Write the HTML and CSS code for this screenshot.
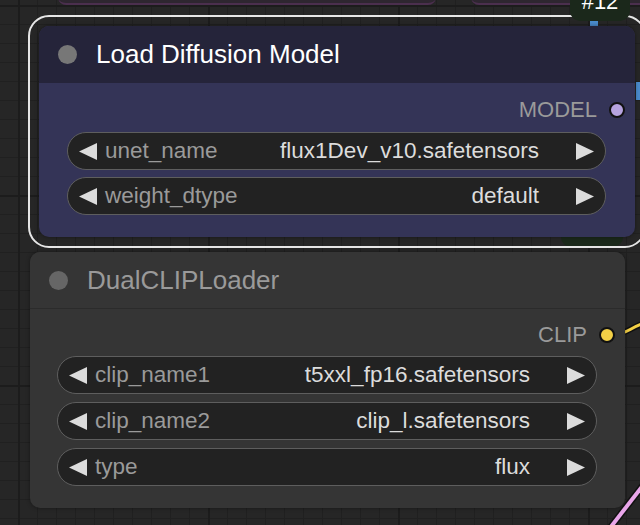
FILE: index.html
```html
<!DOCTYPE html>
<html lang="en">
<head>
  <meta charset="UTF-8">
  <title>Workflow</title>
  <link rel="stylesheet" href="styles.css">
</head>
<body>

  <div class="canvas">

    <!-- links are drawn under the nodes -->
    <svg class="links" width="640" height="525" viewBox="0 0 640 525">
      <path d="M612 335 C 625 335, 630 328, 642 324" stroke="#111" stroke-width="6" fill="none"/>
      <path d="M612 335 C 625 335, 630 328, 642 324" stroke="#f3d046" stroke-width="3" fill="none"/>
      <path d="M610 528 L 644 484" stroke="#111" stroke-width="7" fill="none"/>
      <path d="M610 528 L 644 484" stroke="#e9a6ea" stroke-width="4" fill="none"/>
      <rect x="590" y="20" width="8" height="7" fill="#4a8bcc"/>
      <rect x="636" y="82" width="5" height="18" fill="#4a8bcc"/>
    </svg>

    <div class="ghost ghost-left"></div>
    <div class="ghost ghost-right"></div>
    <div class="ghost-green"></div>

    <div class="node node-load selected">
      <div class="node-title">
        <span class="title-dot"></span>
        <span class="title-text">Load Diffusion Model</span>
      </div>
      <div class="node-body">
        <div class="output">
          <span class="output-name">MODEL</span>
          <span class="slot slot-model"></span>
        </div>
        <div class="widget">
          <svg class="arrow" width="18" height="17" viewBox="0 0 18 17"><polygon points="18,0 18,17 0,8.5"/></svg>
          <span class="widget-label">unet_name</span>
          <span class="widget-value">flux1Dev_v10.safetensors</span>
          <svg class="arrow" width="18" height="17" viewBox="0 0 18 17"><polygon points="0,0 0,17 18,8.5"/></svg>
        </div>
        <div class="widget">
          <svg class="arrow" width="18" height="17" viewBox="0 0 18 17"><polygon points="18,0 18,17 0,8.5"/></svg>
          <span class="widget-label">weight_dtype</span>
          <span class="widget-value">default</span>
          <svg class="arrow" width="18" height="17" viewBox="0 0 18 17"><polygon points="0,0 0,17 18,8.5"/></svg>
        </div>
      </div>
    </div>

    <div class="node-id">#12</div>

    <div class="node node-clip">
      <div class="node-title">
        <span class="title-dot"></span>
        <span class="title-text">DualCLIPLoader</span>
      </div>
      <div class="node-body">
        <div class="output">
          <span class="output-name">CLIP</span>
          <span class="slot slot-clip"></span>
        </div>
        <div class="widget">
          <svg class="arrow" width="18" height="17" viewBox="0 0 18 17"><polygon points="18,0 18,17 0,8.5"/></svg>
          <span class="widget-label">clip_name1</span>
          <span class="widget-value">t5xxl_fp16.safetensors</span>
          <svg class="arrow" width="18" height="17" viewBox="0 0 18 17"><polygon points="0,0 0,17 18,8.5"/></svg>
        </div>
        <div class="widget">
          <svg class="arrow" width="18" height="17" viewBox="0 0 18 17"><polygon points="18,0 18,17 0,8.5"/></svg>
          <span class="widget-label">clip_name2</span>
          <span class="widget-value">clip_l.safetensors</span>
          <svg class="arrow" width="18" height="17" viewBox="0 0 18 17"><polygon points="0,0 0,17 18,8.5"/></svg>
        </div>
        <div class="widget">
          <svg class="arrow" width="18" height="17" viewBox="0 0 18 17"><polygon points="18,0 18,17 0,8.5"/></svg>
          <span class="widget-label">type</span>
          <span class="widget-value">flux</span>
          <svg class="arrow" width="18" height="17" viewBox="0 0 18 17"><polygon points="0,0 0,17 18,8.5"/></svg>
        </div>
      </div>
    </div>

  </div>

</body>
</html>
```

FILE: styles.css
```css
body {
  margin: 0;
  font-family: "Liberation Sans", Arial, sans-serif;
  background: #262626;
}

.canvas {
  position: relative;
  width: 640px;
  height: 525px;
  overflow: hidden;
  background-color: #262626;
  background-image:
    linear-gradient(90deg, #1c1c1c 2px, transparent 2px),
    linear-gradient(#1c1c1c 2px, transparent 2px),
    linear-gradient(90deg, #202020 1px, transparent 1px),
    linear-gradient(#202020 1px, transparent 1px);
  background-size: 190px 190px, 190px 190px, 19px 19px, 19px 19px;
  background-position: 18px 5px, 18px 5px, 18px 5px, 18px 5px;
}

.links {
  position: absolute;
  left: 0;
  top: 0;
}

/* bottoms of nodes sitting above the view */
.ghost {
  position: absolute;
  top: -30px;
  height: 33px;
  background: #2e2630;
  border-bottom: 2px solid #4b2f4e;
  border-radius: 0 0 8px 8px;
}

.ghost-left {
  left: 58px;
  width: 378px;
}

.ghost-right {
  left: 471px;
  width: 200px;
}

.ghost-green {
  position: absolute;
  left: 561px;
  top: 60px;
  width: 62px;
  height: 187px;
  background: #1b291b;
  border-radius: 10px;
}

.node {
  position: absolute;
  display: flex;
  flex-direction: column;
  border-radius: 10px;
  background: #353535;
  box-shadow: 0 0 4px rgba(0, 0, 0, 0.4);
}

.node-load {
  left: 39px;
  top: 26px;
  width: 596px;
  background: #343457;
}

.node-clip {
  left: 30px;
  top: 252px;
  width: 595px;
}

.selected {
  outline: 2px solid #e6e6e6;
  outline-offset: 9px;
}

.node-title {
  display: flex;
  align-items: center;
  gap: 19px;
  height: 57px;
  padding-left: 19px;
  border-radius: 10px 10px 0 0;
  font-size: 26px;
}

.node-load .node-title {
  background: #25243a;
  color: #fff;
}

.node-clip .node-title {
  height: 56px;
  background: #353535;
  color: #9a9a9a;
  border-bottom: 1px solid #2b2b2b;
}

.title-dot {
  width: 19px;
  height: 19px;
  border-radius: 50%;
  background: #777;
}

.node-clip .title-dot {
  background: #666;
}

.node-body {
  display: flex;
  flex-direction: column;
  gap: 7px;
  padding: 14px 29px 22px 28px;
}

.node-clip .node-body {
  gap: 8px;
  padding: 13px 28px 22px 27px;
}

.output {
  display: flex;
  align-items: center;
  justify-content: flex-end;
  gap: 12px;
  height: 26px;
  margin: 0 -19px 2px 0;
  font-size: 22px;
  color: #9a9a9a;
}

.node-clip .output {
  margin: 0 -18px 0 0;
}

.slot {
  width: 12px;
  height: 12px;
  border-radius: 50%;
  border: 2px solid #111;
}

.slot-model {
  background: #b6a3df;
}

.slot-clip {
  background: #f3d046;
}

.widget {
  display: flex;
  align-items: center;
  height: 36px;
  padding: 0 11px 0 11px;
  border: 1.5px solid #5e5e5e;
  border-radius: 20px;
  background: #222;
  font-size: 22.5px;
}

.arrow {
  fill: #dcdcdc;
  flex-shrink: 0;
}

.widget-label {
  margin-left: 8px;
  color: #9a9a9a;
}

.widget-value {
  flex: 1;
  margin-right: 37px;
  text-align: right;
  color: #dcdcdc;
}

.node-id {
  position: absolute;
  left: 570px;
  top: -15px;
  width: 60px;
  height: 30px;
  padding-top: 6px;
  border-radius: 10px;
  background: #1b281b;
  color: #fff;
  font-size: 22px;
  line-height: 22px;
  text-align: center;
}
```
